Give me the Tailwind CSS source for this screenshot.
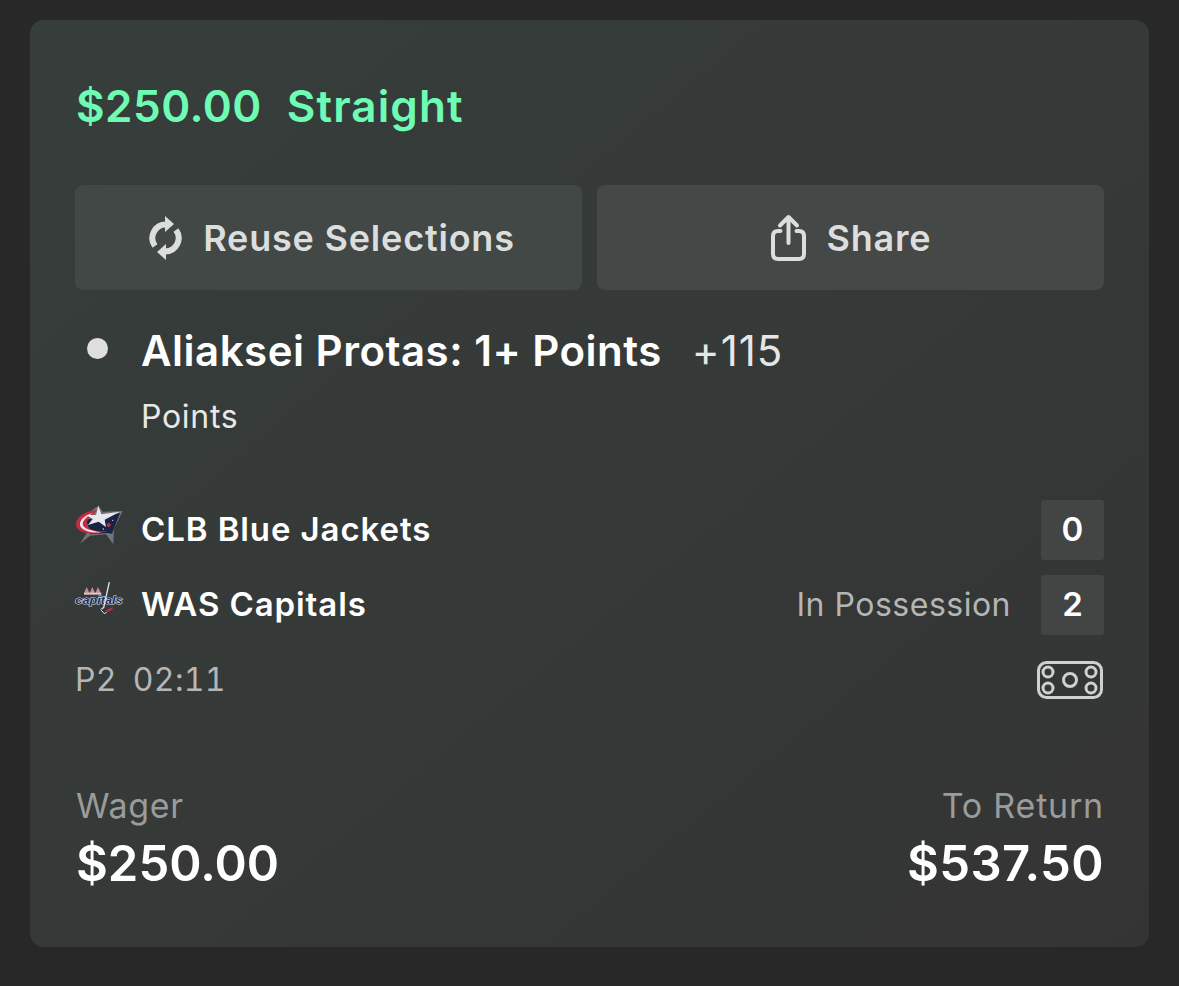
<!doctype html>
<html lang="en">
	<head>
		<meta charset="UTF-8" />
		<title>Bet Card</title>
		<script src="https://cdn.jsdelivr.net/npm/@tailwindcss/browser@4"></script>
	</head>
	<body class="bg-[#282828] font-['Inter',sans-serif] text-white h-[986px] overflow-hidden">
		<div class="pt-5 px-[30px]">
			<div class="h-[927px] rounded-[14px] bg-gradient-to-br from-[#363e3b] to-[#343434] px-[45px]">
				<!-- header -->
				<div class="pt-[59px] h-[165px] flex gap-[25px] text-[44px] leading-[54px] font-semibold text-[#6efcb4]">
					<span class="pl-[1px] tracking-[0.5px]">$250.00</span>
					<span class="tracking-[1.1px]">Straight</span>
				</div>

				<!-- buttons -->
				<div class="grid grid-cols-2 gap-[15px] h-[105px]">
					<div class="rounded-lg bg-[#424846] flex items-center justify-center gap-[20px] pl-[6px] text-[#dcdedd] text-[36px] font-semibold tracking-[0.8px]">
						<svg width="35" height="44" viewBox="0 0 35 44" fill="none">
							<path d="M18 8.500 A13.500 13.500 0 0 0 7 30" stroke="#dcdedd" stroke-width="6" />
							<path d="M17 35.500 A13.500 13.500 0 0 0 28 14" stroke="#dcdedd" stroke-width="6" />
							<path d="M17 0 L26 8 L17 16 Z" fill="#dcdedd" />
							<path d="M18 28 L9 36 L18 44 Z" fill="#dcdedd" />
						</svg>
						<span>Reuse Selections</span>
					</div>
					<div class="rounded-lg bg-[#444846] flex items-center justify-center gap-[20px] text-[#dcdedd] text-[36px] font-semibold tracking-[0.8px]">
						<svg width="37" height="47" viewBox="0 0 37 47" fill="none" stroke="#dcdedd" stroke-width="4" stroke-linecap="round" stroke-linejoin="round">
							<path d="M10.500 17 H8 Q3 17 3 22 V40 Q3 45 8 45 H29 Q34 45 34 40 V22 Q34 17 29 17 H26.500" />
							<path d="M18.500 29 V3 M10 11.500 L18.500 3 L27 11.500" />
						</svg>
						<span>Share</span>
					</div>
				</div>

				<!-- selection -->
				<div class="flex items-start mt-[34px]">
					<div class="w-[67px] pl-[12px] pt-[14px]">
						<div class="w-[21px] h-[21px] rounded-full bg-[#dedede]"></div>
					</div>
					<div>
						<div class="flex items-baseline gap-[30px] h-[54px] leading-[54px]">
							<span class="text-[42px] font-semibold tracking-[0.5px] -ml-[1px]">Aliaksei Protas: 1+ Points</span>
							<span class="text-[42px] text-[#e6e6e6] tracking-[1px]">+115</span>
						</div>
						<div class="text-[32px] leading-[40px] mt-[19px] -ml-[1px] tracking-[0.7px] text-[#e8e8e8]">Points</div>
					</div>
				</div>

				<!-- teams -->
				<div class="mt-[63px] flex items-center h-[60px]">
					<div class="w-[67px]">
						<svg width="49" height="39" viewBox="15 12 147 117" class="block -translate-y-[6px]">
							<path d="M30 128 L50 96 L18 70 L60 32 L85 14 L98 32 L158 30 L132 84 L130 130 L108 100 L60 104 Z" fill="#6f747c" />
							<path d="M48 56 L150 36 L126 98 L112 96 L62 100 Z" fill="#1a2344" />
							<path d="M82 28 C42 30 16 50 18 72 C20 94 62 108 112 90 C84 94 52 88 50 70 C50 56 64 44 82 28 Z" fill="#c22c42" />
							<path d="M68 36 C42 44 28 58 30 72 C32 86 60 98 92 94 C66 90 40 84 38 70 C38 58 52 46 68 36 Z" fill="#efe6e6" />
							<path d="M85 14 L94 40 L150 32 L104 56 L108 78 L86 62 L54 72 L68 54 L48 42 L78 42 Z" fill="#e6e8ee" />
							<circle cx="116" cy="72" r="6" fill="#b8363f" />
							<circle cx="128" cy="58" r="2" fill="#e6e8ee" />
							<circle cx="100" cy="84" r="2" fill="#e6e8ee" />
						</svg>
					</div>
					<span class="text-[33px] font-semibold tracking-[0.9px] -ml-[1px] flex-1">CLB Blue Jackets</span>
					<div class="w-[63px] h-[60px] bg-[#434544] rounded-[3px] flex items-center justify-center text-[33px] font-semibold">0</div>
				</div>
				<div class="mt-[15px] flex items-center h-[60px]">
					<div class="w-[67px]">
						<svg width="50" height="32" viewBox="12 15 150 96" class="block -ml-[1px] -translate-y-[7px]">
							<path d="M45 48 L50 36 L56 48 M62 48 L67 36 L73 48 M79 48 L84 36 L90 48" fill="#c98a92" stroke="#c98a92" stroke-width="5" />
							<rect x="42" y="47" width="52" height="6" fill="#d9c9cd" />
							<text x="16" y="80" textLength="142" lengthAdjust="spacingAndGlyphs" font-family="Liberation Sans" font-size="34" font-weight="700" font-style="italic" fill="#222c58" stroke="#dfe2ea" stroke-width="3" paint-order="stroke">capitals</text>
							<path d="M118 15 L101 92 L94 96" fill="none" stroke="#dfe2ea" stroke-width="4" />
							<path d="M92 98 L103 110 L110 106" fill="none" stroke="#dfe2ea" stroke-width="3" />
							<path d="M108 100 L130 90 L126 98 L112 106 Z" fill="#c22c42" />
						</svg>
					</div>
					<span class="text-[33px] font-semibold tracking-[0.9px] -ml-[1px] flex-1">WAS Capitals</span>
					<span class="text-[32px] text-[#b4b6b5] tracking-[0.5px] mr-[30px]">In Possession</span>
					<div class="w-[63px] h-[60px] bg-[#434544] rounded-[3px] flex items-center justify-center text-[33px] font-semibold">2</div>
				</div>
				<div class="mt-[15px] flex items-center justify-between h-[60px]">
					<div class="flex gap-[16px] text-[32px] text-[#b4b6b5] tabular-nums tracking-[0.3px]">
						<span>P2</span>
						<span>02:11</span>
					</div>
					<svg width="66" height="38" viewBox="0 0 66 38" fill="none" stroke="#cfd1d0" stroke-width="3" class="mr-[1px]">
						<rect x="1.500" y="1.500" width="63" height="35" rx="8" />
						<circle cx="11" cy="11" r="5" />
						<circle cx="11" cy="27" r="5" />
						<circle cx="54" cy="11" r="5" />
						<circle cx="54" cy="27" r="5" />
						<circle cx="33" cy="19" r="6.500" />
					</svg>
				</div>

				<!-- totals -->
				<div class="mt-[74px] flex justify-between">
					<div class="pl-[1px]">
						<div class="text-[34px] leading-[44px] tracking-[0.7px] text-[#9a9c9b]">Wager</div>
						<div class="text-[49px] leading-[60px] mt-[6px] font-semibold">$250.00</div>
					</div>
					<div class="text-right">
						<div class="text-[34px] leading-[44px] tracking-[0.8px] text-[#9a9c9b]">To Return</div>
						<div class="text-[49px] leading-[60px] mt-[6px] font-semibold tracking-[0.4px]">$537.50</div>
					</div>
				</div>
			</div>
		</div>
	</body>
</html>
